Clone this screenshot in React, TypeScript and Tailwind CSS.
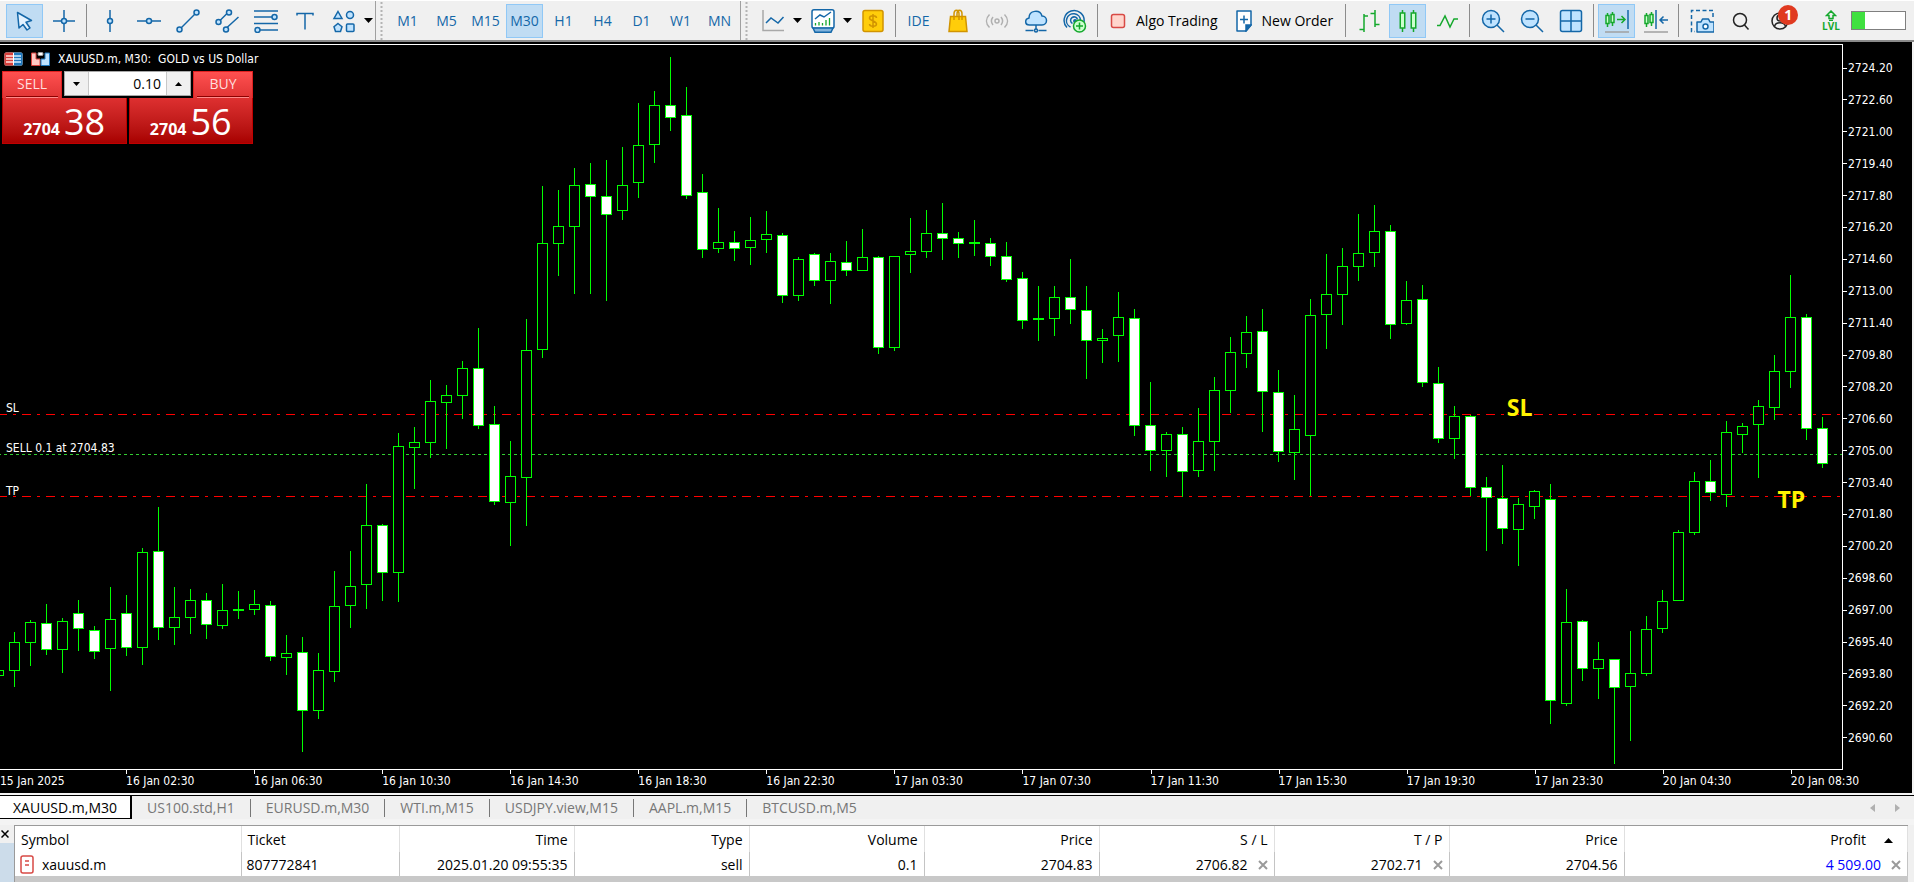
import React, { useState } from 'react';
import clsx from 'clsx';

// [high, body top, body bottom, low, bearish]
type Candle = [number, number, number, number, 0 | 1];

const CANDLES: Candle[] = [
  [670, 670, 676, 676, 0], [632, 642, 671, 687, 0], [620, 622, 643, 666, 0], [604, 623, 650, 655, 1],
  [618, 621, 650, 673, 0], [600, 613, 629, 651, 1], [626, 630, 652, 659, 1], [587, 619, 649, 691, 0],
  [595, 613, 648, 656, 1], [548, 552, 648, 665, 0], [507, 551, 628, 640, 1], [587, 617, 628, 645, 0],
  [589, 600, 618, 634, 0], [593, 600, 625, 639, 1], [584, 610, 626, 629, 0], [591, 609, 611, 619, 0],
  [590, 604, 610, 615, 0], [601, 605, 657, 661, 1], [635, 653, 658, 675, 0], [637, 652, 711, 752, 1],
  [653, 670, 711, 719, 0], [571, 606, 672, 682, 0], [551, 586, 606, 628, 0], [484, 525, 585, 609, 0],
  [524, 525, 573, 601, 1], [433, 446, 573, 602, 0], [427, 442, 448, 489, 0], [380, 401, 443, 458, 0],
  [385, 395, 403, 449, 0], [361, 368, 396, 419, 0], [328, 368, 426, 429, 1], [406, 424, 502, 505, 1],
  [441, 476, 503, 546, 0], [319, 350, 478, 526, 0], [186, 243, 350, 358, 0], [190, 226, 244, 276, 0],
  [168, 185, 227, 294, 0], [163, 184, 197, 294, 1], [160, 196, 215, 301, 1], [147, 185, 211, 220, 0],
  [103, 145, 183, 198, 0], [91, 105, 145, 163, 0], [57, 105, 118, 131, 1], [87, 115, 196, 199, 1],
  [174, 192, 250, 258, 1], [208, 242, 249, 253, 0], [231, 242, 249, 261, 1], [217, 240, 248, 265, 0],
  [211, 234, 240, 253, 0], [233, 235, 296, 303, 1], [257, 259, 296, 301, 0], [253, 254, 281, 286, 1],
  [253, 261, 281, 304, 0], [241, 262, 271, 276, 1], [229, 257, 271, 271, 0], [256, 257, 348, 354, 1],
  [256, 256, 348, 351, 0], [218, 251, 255, 273, 0], [210, 233, 252, 258, 0], [203, 233, 239, 260, 1],
  [232, 238, 244, 258, 1], [220, 242, 244, 256, 0], [238, 243, 257, 266, 1], [242, 256, 280, 282, 1],
  [272, 278, 321, 329, 1], [286, 318, 320, 341, 0], [286, 297, 319, 336, 0], [259, 297, 310, 324, 1],
  [286, 310, 341, 379, 1], [329, 338, 341, 363, 0], [292, 317, 336, 362, 0], [309, 318, 426, 436, 1],
  [382, 425, 451, 471, 1], [432, 434, 451, 477, 0], [427, 434, 472, 497, 1], [408, 441, 471, 477, 0],
  [377, 390, 442, 471, 0], [337, 352, 391, 413, 0], [316, 332, 354, 368, 0], [309, 331, 392, 432, 1],
  [370, 392, 452, 462, 1], [395, 429, 453, 480, 0], [299, 315, 436, 496, 0], [254, 294, 315, 349, 0],
  [248, 266, 295, 325, 0], [214, 253, 267, 281, 0], [205, 231, 253, 267, 0], [225, 231, 325, 339, 1],
  [281, 300, 324, 325, 0], [285, 299, 383, 387, 1], [367, 383, 439, 443, 1], [406, 416, 439, 459, 0],
  [415, 416, 488, 496, 1], [477, 487, 498, 551, 1], [465, 498, 529, 544, 1], [498, 504, 530, 566, 0],
  [490, 491, 507, 519, 0], [484, 499, 701, 724, 1], [589, 622, 704, 706, 0], [620, 621, 669, 681, 1],
  [642, 659, 669, 699, 0], [659, 659, 688, 764, 1], [631, 673, 687, 741, 0], [616, 629, 674, 676, 0],
  [590, 601, 629, 633, 0], [530, 532, 601, 601, 0], [472, 481, 533, 535, 0], [460, 481, 493, 501, 1],
  [421, 432, 495, 507, 0], [423, 426, 435, 453, 0], [400, 406, 425, 478, 0], [355, 371, 408, 420, 0],
  [275, 317, 372, 388, 0], [314, 317, 429, 440, 1], [417, 428, 464, 468, 1],
];

const PRICES = Array.from({ length: 22 }, (_, i) => (2724.2 - i * 1.6).toFixed(2));

const DATES = [
  '15 Jan 2025', '16 Jan 02:30', '16 Jan 06:30', '16 Jan 10:30', '16 Jan 14:30',
  '16 Jan 18:30', '16 Jan 22:30', '17 Jan 03:30', '17 Jan 07:30', '17 Jan 11:30',
  '17 Jan 15:30', '17 Jan 19:30', '17 Jan 23:30', '20 Jan 04:30', '20 Jan 08:30',
];

const TIMEFRAMES = ['M1', 'M5', 'M15', 'M30', 'H1', 'H4', 'D1', 'W1', 'MN'];

const TABS = ['XAUUSD.m,M30', 'US100.std,H1', 'EURUSD.m,M30', 'WTI.m,M15', 'USDJPY.view,M15', 'AAPL.m,M15', 'BTCUSD.m,M5'];

const BLUE = '#1467a8';
const SKY = '#bfe3ff';
const GREEN = '#14a82c';

const Icon = ({ children, color = BLUE }: { children: React.ReactNode; color?: string }) => (
  <svg width="24" height="24" viewBox="0 0 24 24" fill="none" stroke={color} strokeWidth="1.5" className="shrink-0" aria-hidden="true">
    {children}
  </svg>
);

interface ToolButtonProps {
  label: string;
  active?: boolean;
  onClick?: () => void;
  children: React.ReactNode;
}

const ToolButton = ({ label, active, onClick, children }: ToolButtonProps) => (
  <button
    aria-label={label}
    onClick={onClick}
    className={clsx(
      'relative flex h-[34px] w-[37px] shrink-0 items-center justify-center border text-[14px] text-[#1467a8]',
      active ? 'border-[#90c8f6] bg-[#c0dcf3]' : 'border-transparent'
    )}
  >
    {children}
  </button>
);

const Caret = ({ label }: { label: string }) => (
  <button aria-label={label} className="flex h-[34px] w-[9px] shrink-0 items-center justify-center">
    <svg width="9" height="5" viewBox="0 0 9 5" aria-hidden="true"><path d="M0 0h9L4.5 5z" /></svg>
  </button>
);

const Separator = () => <div className="mx-[2px] h-[33px] w-px shrink-0 bg-[#8c8c8c]" />;

const Grip = () => (
  <svg width="3" height="39" className="mr-[4px] ml-[2px] shrink-0" aria-hidden="true">
    <path d="M1.5 1v38" stroke="#b4b4b4" strokeWidth="2" strokeDasharray="2 2" />
  </svg>
);

const Toolbar = () => {
  const [timeframe, setTimeframe] = useState('M30');

  return (
    <header className="flex h-[42px] items-center gap-[2px] overflow-hidden border-t border-b-2 border-t-white border-b-[#8a8a8a] bg-[#f0f0f0] pl-[6px]">
      <ToolButton label="Cursor" active>
        <Icon><path d="M4.5 3.5l14 8-5.5 1.8 4 5.7-3 2-4-5.5-4 3.5z" fill="#e3f2ff" strokeLinejoin="round" /></Icon>
      </ToolButton>
      <ToolButton label="Crosshair">
        <Icon><path d="M12 1v8M12 15v8M1 12h8M15 12h8" /><circle cx="12" cy="12" r="2.5" fill={SKY} /></Icon>
      </ToolButton>
      <Separator />
      <ToolButton label="Vertical line">
        <Icon><path d="M12 1v22" /><circle cx="12" cy="12" r="2.5" fill={SKY} /></Icon>
      </ToolButton>
      <ToolButton label="Horizontal line">
        <Icon><path d="M0 12h24" /><circle cx="12" cy="12" r="2.5" fill={SKY} /></Icon>
      </ToolButton>
      <ToolButton label="Trend line">
        <Icon><path d="M5 19L19 5" /><circle cx="20.5" cy="3.5" r="2.5" fill={SKY} /><circle cx="3.5" cy="20.5" r="2.5" fill={SKY} /></Icon>
      </ToolButton>
      <ToolButton label="Equidistant channel">
        <Icon>
          <path d="M5 11.5L12.5 4M12 18.5L23.5 8" />
          <circle cx="14" cy="3.5" r="2.5" fill={SKY} />
          <circle cx="3.5" cy="13" r="2.5" fill={SKY} />
          <circle cx="11" cy="20.5" r="2.5" fill={SKY} />
        </Icon>
      </ToolButton>
      <ToolButton label="Fibonacci retracement">
        <Icon>
          <path d="M0 2h24M0 8h18M0 14.5h24M6 21h18" />
          <circle cx="20.5" cy="8" r="2.5" fill={SKY} />
          <circle cx="3.5" cy="21" r="2.5" fill={SKY} />
        </Icon>
      </ToolButton>
      <ToolButton label="Text">
        <Icon><path d="M4 6.5V4.5h16v2M12 4.5V20.5" /></Icon>
      </ToolButton>
      <ToolButton label="Shapes">
        <Icon>
          <path d="M6 2.5L10 9.5H2z" fill={SKY} />
          <circle cx="18" cy="6" r="3.5" fill={SKY} />
          <path d="M6 14.5l4 3.2-1.5 4.8h-5L2 17.7z" fill={SKY} />
          <rect x="14.5" y="15" width="7.5" height="7.5" rx="1" fill={SKY} />
        </Icon>
      </ToolButton>
      <Caret label="More shapes" />
      <div className="h-full w-px shrink-0 bg-[#a0a0a0]" />
      <Grip />
      {TIMEFRAMES.map((tf) => (
        <ToolButton key={tf} label={tf} active={timeframe === tf} onClick={() => setTimeframe(tf)}>
          {tf}
        </ToolButton>
      ))}
      <div className="h-full w-px shrink-0 bg-[#a0a0a0]" />
      <Grip />
      <ToolButton label="Chart type">
        <Icon><path d="M2 1v20.5h21" stroke="#a8a8a8" /><path d="M5 14l5-5 7 5 5.5-6" /></Icon>
      </ToolButton>
      <Caret label="Chart types" />
      <ToolButton label="Indicators">
        <Icon>
          <rect x="1" y="0.75" width="22" height="18.5" rx="2" fill="#fff" />
          <path d="M2 19l2 4.25h16l2-4.25z" fill="#7fb2dc" />
          <path d="M4 10l5-4 4 2 7-5" />
          <path d="M4.5 14v2.5M8 13v3.5M11.5 14v2.5M15 11v5.5M18.5 9v7.5" stroke={GREEN} strokeWidth="1.3" />
        </Icon>
      </ToolButton>
      <Caret label="Indicator list" />
      <ToolButton label="Market depth">
        <Icon color="#d19400">
          <rect x="2" y="1.5" width="20" height="21" rx="2" fill="#ffcd0a" />
          <path d="M12 5v14M15.5 9c0-3-7-3-7 0s7 3 7 6-7 3-7 0" />
        </Icon>
      </ToolButton>
      <Separator />
      <ToolButton label="IDE">IDE</ToolButton>
      <ToolButton label="Market">
        <Icon color="#d19400">
          <path d="M4.5 7.5h15L21 22.5H3z" fill="#ffcd0a" />
          <path d="M8 11V5c0-5 5-5 5 0v6M11 8V5c0-5 5-5 5 0v6" />
        </Icon>
      </ToolButton>
      <ToolButton label="Signals">
        <Icon color="#b0b0b0">
          <circle cx="12" cy="12" r="2" />
          <path d="M8 8c-2 2.5-2 5.5 0 8M16 8c2 2.5 2 5.5 0 8M4.5 5.5c-4 4-4 9 0 13M19.5 5.5c4 4 4 9 0 13" />
        </Icon>
      </ToolButton>
      <ToolButton label="Virtual hosting">
        <Icon>
          <path d="M5.5 16c-5 0-5-6-.5-7 0-8 11-9 13-2 6 0 6 9 0 9z" fill={SKY} />
          <path d="M12 16v4M1.5 21.5h8M14.5 21.5h8" />
          <circle cx="12" cy="21.5" r="1.5" />
        </Icon>
      </ToolButton>
      <ToolButton label="Add indicator">
        <Icon>
          <path d="M4 18.5a10 10 0 1 1 17-5.5M7.5 18a7 7 0 1 1 10-6.5M9.5 14.5a3.5 3.5 0 1 1 5-4" />
          <circle cx="12" cy="12" r="1.2" fill={BLUE} />
          <circle cx="16.5" cy="17" r="6" fill="#ccffcf" stroke={GREEN} />
          <path d="M16.5 13.5v7M13 17h7" stroke={GREEN} />
        </Icon>
      </ToolButton>
      <Separator />
      <button className="flex h-[34px] shrink-0 items-center gap-[10px] px-2 text-[14px] text-black">
        <svg width="16" height="16" aria-hidden="true"><rect x="1.5" y="1.5" width="13" height="13" rx="2" fill="#ffd5cc" stroke="#d84a45" strokeWidth="1.5" /></svg>
        Algo Trading
      </button>
      <button className="flex h-[34px] shrink-0 items-center gap-[10px] px-2 text-[14px] text-black">
        <svg width="16" height="22" viewBox="0 0 16 22" fill="none" stroke={BLUE} strokeWidth="1.5" aria-hidden="true">
          <path d="M1 1h14v14l-5 6H1z" fill="#fff" strokeLinejoin="round" />
          <path d="M10 21v-6h5z" fill={BLUE} />
          <path d="M8 5.5v8M4 9.5h8" />
        </svg>
        New Order
      </button>
      <Separator />
      <ToolButton label="Bar chart">
        <Icon color={GREEN}><path d="M7 5v18M7 7h4M2.5 20.5H7M18 1v17M13.5 4.5H18M18 15.5h4.5" /></Icon>
      </ToolButton>
      <ToolButton label="Candlesticks" active>
        <Icon color={GREEN}>
          <path d="M6.5 1v22M17.5 1v22" />
          <rect x="4.25" y="4" width="4.5" height="15" fill="#ccffcf" />
          <rect x="15.25" y="4" width="4.5" height="15" fill="#ccffcf" />
        </Icon>
      </ToolButton>
      <ToolButton label="Line chart">
        <Icon color={GREEN}><path d="M2 16.5h3l5-9.5 5 11 4-8h4" /></Icon>
      </ToolButton>
      <Separator />
      <ToolButton label="Zoom in">
        <Icon><circle cx="10" cy="10" r="8.5" fill={SKY} /><path d="M16 16l7 7M10 5.5v9M5.5 10h9" /></Icon>
      </ToolButton>
      <ToolButton label="Zoom out">
        <Icon><circle cx="10" cy="10" r="8.5" fill={SKY} /><path d="M16 16l7 7M5.5 10h9" /></Icon>
      </ToolButton>
      <ToolButton label="Tile windows">
        <Icon><rect x="1.5" y="1.5" width="21" height="21" rx="2" fill={SKY} /><path d="M12 1.5v21M1.5 12h21" /></Icon>
      </ToolButton>
      <Separator />
      <ToolButton label="Auto scroll" active>
        <Icon color={GREEN}>
          <path d="M2.5 4v14M7.5 3v14M12 10.5h8M16.5 7l3.5 3.5-3.5 3.5" />
          <rect x="1" y="6.5" width="3" height="8" fill="#ccffcf" />
          <rect x="6" y="5.5" width="3" height="8" fill="#ccffcf" />
          <path d="M23 1v19" stroke={BLUE} />
          <path d="M0 23h24" stroke="#a0a0a0" />
        </Icon>
      </ToolButton>
      <ToolButton label="Chart shift">
        <Icon color={GREEN}>
          <path d="M2.5 4v14M7.5 3v14" />
          <rect x="1" y="6.5" width="3" height="8" fill="#ccffcf" />
          <rect x="6" y="5.5" width="3" height="8" fill="#ccffcf" />
          <path d="M12 1v19M24 11h-8M19.5 7.5L16 11l3.5 3.5" stroke={BLUE} />
          <path d="M0 23h24" stroke="#a0a0a0" />
        </Icon>
      </ToolButton>
      <Separator />
      <ToolButton label="Screenshot">
        <Icon>
          <path d="M23 8V1.5H1.5v21H5" strokeDasharray="4 2.5" />
          <path d="M7 13h4l1.5-3h6L20 13h4v10H7z" fill={SKY} strokeLinejoin="round" />
          <circle cx="15.5" cy="17.5" r="2.5" fill="#fff" />
        </Icon>
      </ToolButton>
      <ToolButton label="Search">
        <Icon color="#222"><circle cx="11" cy="11" r="6.5" /><path d="M15.5 16l4 4.5" /></Icon>
      </ToolButton>
      <ToolButton label="Account, 1 notification">
        <Icon color="#222"><circle cx="12" cy="12" r="8" /><circle cx="12" cy="9" r="3" /><path d="M6.5 17.5c1-5 10-5 11 0" /></Icon>
        <span className="absolute top-0 right-[-1px] flex size-5 items-center justify-center rounded-full bg-[#e03a20] text-[14px] font-bold text-white">1</span>
      </ToolButton>
      <div className="ml-auto flex items-center gap-[8px] pr-2">
        <button aria-label="Level" className="flex w-[24px] flex-col items-center text-[10px] leading-[10px] font-bold text-[#14a82c]">
          <svg width="12" height="11" viewBox="0 0 12 11" fill="none" stroke={GREEN} strokeWidth="1.5" aria-hidden="true">
            <path d="M6 1L1.5 5.5H4V8.5H8V5.5h2.5zM4 10.5h4" />
          </svg>
          LVL
        </button>
        <div className="h-[19px] w-[55px] border border-[#7f7f7f] bg-white">
          <div className="h-full w-1/4 bg-[#40e040]" />
        </div>
      </div>
    </header>
  );
};

const PriceButton = ({ side, big, small }: { side: string; big: string; small: string }) => (
  <button
    aria-label={`${side} at ${small}.${big}`}
    className="flex h-[46px] flex-1 items-baseline justify-center gap-1 border border-t-0 border-[#c00000] bg-linear-to-b from-[#de3030] to-[#a80000] leading-[48px] text-white"
  >
    <span className="text-[16px] font-bold">{small}</span>
    <span className="text-[36px]">{big}</span>
  </button>
);

const SideLabel = ({ children }: { children: string }) => (
  <button className="h-[27px] w-[60px] border border-b-0 border-[#e02020] bg-linear-to-b from-[#ff5050] to-[#e03434] px-[3px] text-[14px] text-[#ffdede]">
    <span className="block h-[26px] border-b border-[#ff8a8a]">
      <span className="block h-[25px] border-b border-[#8c0000] leading-[24px]">{children}</span>
    </span>
  </button>
);

const OneClickPanel = () => {
  const [volume, setVolume] = useState('0.10');
  const step = (delta: number) => setVolume(Math.max(0.01, parseFloat(volume) + delta).toFixed(2));

  return (
    <div className="absolute top-[29px] left-[2px] w-[251px] bg-black">
      <div className="flex justify-between">
        <SideLabel>SELL</SideLabel>
        <div className="flex h-[25px] w-[127px] border border-[#a8a8a8] bg-white">
          <button aria-label="Decrease volume" onClick={() => step(-0.01)} className="flex w-[24px] items-center justify-center border-r border-[#c8c8c8] bg-[#f0f0f0]">
            <svg width="7" height="4" aria-hidden="true"><path d="M0 0h7L3.5 4z" /></svg>
          </button>
          <input
            aria-label="Volume"
            value={volume}
            onChange={(e) => setVolume(e.target.value)}
            className="w-0 flex-1 pr-[5px] text-right text-[14px] text-black outline-none"
          />
          <button aria-label="Increase volume" onClick={() => step(0.01)} className="flex w-[24px] items-center justify-center border-l border-[#c8c8c8] bg-[#f0f0f0]">
            <svg width="7" height="4" aria-hidden="true"><path d="M0 4h7L3.5 0z" /></svg>
          </button>
        </div>
        <SideLabel>BUY</SideLabel>
      </div>
      <div className="flex gap-[2px]">
        <PriceButton side="Sell" small="2704" big="38" />
        <PriceButton side="Buy" small="2704" big="56" />
      </div>
    </div>
  );
};

const Level = ({ y, color, dash }: { y: number; color: string; dash: string }) => (
  <line x1="-2" x2="1842" y1={y + 0.5} y2={y + 0.5} stroke={color} strokeDasharray={dash} />
);

const Plot = () => (
  <svg viewBox="0 45 1842 724" preserveAspectRatio="none" shapeRendering="crispEdges" className="absolute inset-0 h-full w-full" role="img" aria-label="XAUUSD.m M30 candlestick chart">
    <Level y={414} color="#ff0000" dash="9 6 3 6" />
    <Level y={454} color="#32cd32" dash="3 3" />
    <Level y={496} color="#ff0000" dash="9 6 3 6" />
    {CANDLES.map(([high, top, bottom, low, bearish], i) => {
      const x = i * 16 - 2;
      return (
        <g key={i}>
          <rect x={x} y={high} width="1" height={low - high} fill="#00ff00" />
          <rect x={x - 5} y={top} width="11" height={bottom - top} fill="#00ff00" />
          <rect x={x - 4} y={top + 1} width="9" height={bottom - top - 2} fill={bearish ? '#fff' : '#000'} />
        </g>
      );
    })}
  </svg>
);

const Chart = () => (
  <main className="relative mr-[2px] flex flex-1 flex-col bg-black pt-[2px] font-['DejaVu_Sans_Condensed','Noto_Sans',sans-serif] text-[12px] text-white">
    <div className="flex flex-1">
      <div className="relative flex-1 border-t border-r border-b border-white">
        <Plot />
        <span className="absolute top-[49%] left-[6px] leading-4">SL</span>
        <span className="absolute top-[54.5%] left-[6px] leading-4">SELL 0.1 at 2704.83</span>
        <span className="absolute top-[60.5%] left-[6px] leading-4">TP</span>
        <span className="absolute top-[48.5%] left-[81.8%] font-['Open_Sans','Noto_Sans',sans-serif] text-[23px] leading-[22px] font-bold text-[#fff200]">SL</span>
        <span className="absolute top-[61.2%] left-[96.5%] font-['Open_Sans','Noto_Sans',sans-serif] text-[23px] leading-[22px] font-bold text-[#fff200]">TP</span>
      </div>
      <div className="flex w-[69px] flex-col justify-between pt-[16px] pb-[24px]">
        {PRICES.map((price) => (
          <div key={price} className="flex items-center gap-px leading-4">
            <span className="h-px w-[4px] bg-white" />
            {price}
          </div>
        ))}
      </div>
    </div>
    <div className="mr-[69px] flex h-[23px]">
      {DATES.map((date, i) => (
        <div key={date} className={clsx('shrink-0 whitespace-nowrap', i === 0 ? 'w-[6.84%]' : 'w-[6.949%]')}>
          <div className={clsx('h-[4px] w-px', i > 0 && 'bg-white')} />
          <div className="leading-[14px]">{date}</div>
        </div>
      ))}
    </div>

    <div className="absolute top-[9px] left-[4px] flex h-4 items-center gap-2">
      <svg width="19" height="14" viewBox="0 0 19 14" aria-hidden="true">
        <rect x="0.5" y="0.5" width="18" height="13" rx="1.5" fill="#fff" />
        <path d="M9 .5H2A1.500 1.500 0 0 0 .5 2v10A1.500 1.500 0 0 0 2 13.500h7z" fill="#d8403c" />
        <path d="M10 .5h7A1.500 1.500 0 0 1 18.500 2v10a1.500 1.500 0 0 1-1.500 1.500h-7z" fill="#1f78bd" />
        <path d="M2 4h7M2 7h7M2 10h7" stroke="#ffe0dc" strokeWidth="1.5" />
        <path d="M10 4h7M10 7h7M10 10h7" stroke="#d4ecff" strokeWidth="1.5" />
      </svg>
      <svg width="19" height="14" viewBox="0 0 19 14" aria-hidden="true">
        <path d="M.5 1H5v6h4v6.500H.5z" fill="#ffc9c4" stroke="#d8403c" />
        <path d="M18.500 1H14v6h-4v6.500h8.500z" fill="#bfe3ff" stroke="#1f78bd" />
        <rect x="7" y="0.5" width="5" height="3" rx="1" fill="#fff" stroke="#9a9a9a" />
      </svg>
      <h1 className="whitespace-pre">XAUUSD.m, M30:  GOLD vs US Dollar</h1>
    </div>
    <div className="font-['Open_Sans','Noto_Sans',sans-serif]">
      <OneClickPanel />
    </div>
  </main>
);

const ChartTabs = () => {
  const [active, setActive] = useState(TABS[0]);

  return (
    <nav className="mt-[2px] flex h-[24px] items-stretch border-t border-black bg-[#f0f0f0] text-[14px] text-[#777]">
      {TABS.map((tab) => (
        <button
          key={tab}
          onClick={() => setActive(tab)}
          className={clsx(
            'flex shrink-0 items-center',
            active === tab && 'border-r-2 border-b border-black bg-white px-[13px] text-black'
          )}
        >
          {active === tab ? tab : (
            <span className={clsx('px-[15px] leading-[18px]', tab !== TABS[TABS.length - 1] && 'border-r border-[#777]')}>{tab}</span>
          )}
        </button>
      ))}
      <div className="ml-auto flex items-center gap-5 pr-[14px]">
        <button aria-label="Previous tabs"><svg width="5" height="8" aria-hidden="true"><path d="M5 0v8L0 4z" fill="#b0b0b0" /></svg></button>
        <button aria-label="Next tabs"><svg width="5" height="8" aria-hidden="true"><path d="M0 0v8l5-4z" fill="#b0b0b0" /></svg></button>
      </div>
    </nav>
  );
};

const COLUMNS = ['Symbol', 'Ticket', 'Time', 'Type', 'Volume', 'Price', 'S / L', 'T / P', 'Price', 'Profit'];
const CELLS = ['2025.01.20 09:55:35', 'sell', '0.1', '2704.83', '2706.82', '2702.71', '2704.56'];

const CloseMark = ({ label }: { label: string }) => (
  <button aria-label={label} className="ml-[10px]">
    <svg width="10" height="10" viewBox="0 0 10 10" stroke="#9a9a9a" strokeWidth="2" aria-hidden="true"><path d="M1 1l8 8M9 1L1 9" /></svg>
  </button>
);

const Trades = () => (
  <section className="mt-[6px] flex h-[57px] bg-[#f0f0f0]">
    <div className="flex w-[14px] shrink-0 flex-col">
      <button aria-label="Close toolbox" className="flex h-[18px] items-center pl-px">
        <svg width="8" height="8" viewBox="0 0 8 8" stroke="#000" strokeWidth="1.5" aria-hidden="true"><path d="M.5.5l7 7M7.5.5l-7 7" /></svg>
      </button>
      <div className="flex-1 bg-[#ccdcea]" />
    </div>
    <div className="mr-[6px] flex-1 border-t border-l border-[#9a9a9a] bg-[#c8c8c8]">
      <table className="w-full table-fixed border-collapse bg-white text-[14px] text-black">
        <colgroup>
          <col className="w-[226px]" />
          <col className="w-[158px]" />
          {CELLS.map((cell) => <col key={cell} className="w-[175px]" />)}
          <col />
        </colgroup>
        <thead>
          <tr className="h-[26px]">
            {COLUMNS.map((name, i) => (
              <th key={i} className={clsx('border-r border-[#e0e0e0] p-0 px-[6px] font-normal', i < 2 ? 'text-left' : 'text-right')}>
                {name}
                {name === 'Profit' && <svg width="9" height="5" className="mr-2 ml-[18px] inline-block align-middle" aria-hidden="true"><path d="M0 5h9L4.5 0z" /></svg>}
              </th>
            ))}
          </tr>
        </thead>
        <tbody>
          <tr className="h-[24px]">
            <td className="border-r border-[#c4c4c4] p-0 pl-[5px]">
              <div className="flex items-center gap-2">
                <svg width="14" height="19" viewBox="0 0 14 19" fill="none" stroke="#d84a45" strokeWidth="1.5" aria-hidden="true">
                  <rect x="1" y="1" width="12" height="17" rx="2" fill="#fff" />
                  <path d="M5 6h4M5 10h4" />
                </svg>
                xauusd.m
              </div>
            </td>
            <td className="border-r border-[#c4c4c4] p-0 pl-[5px]">807772841</td>
            {CELLS.map((cell, i) => (
              <td key={cell} className="border-r border-[#c4c4c4] p-0 pr-[6px] text-right">
                {cell}
                {(i === 4 || i === 5) && <CloseMark label={i === 4 ? 'Remove stop loss' : 'Remove take profit'} />}
              </td>
            ))}
            <td className="border-r border-[#c4c4c4] p-0 pr-[6px] text-right text-[#0000ff]">
              4 509.00
              <CloseMark label="Close position" />
            </td>
          </tr>
        </tbody>
      </table>
    </div>
  </section>
);

export default function App() {
  return (
    <div className="flex h-screen min-h-[600px] flex-col overflow-hidden bg-[#f4f4f4] font-['Open_Sans','Noto_Sans',sans-serif]">
      <Toolbar />
      <Chart />
      <ChartTabs />
      <Trades />
    </div>
  );
}
